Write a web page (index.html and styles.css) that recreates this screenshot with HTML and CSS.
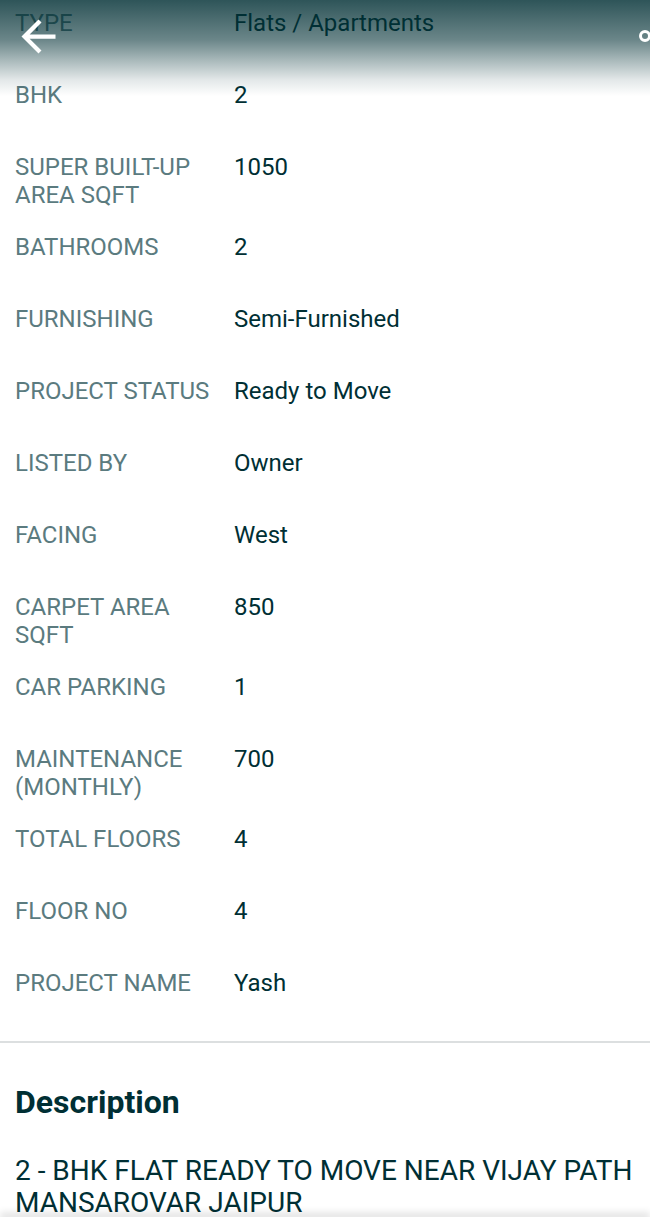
FILE: index.html
```html
<!DOCTYPE html>
<html>
<head>
<meta charset="utf-8">
<link rel="stylesheet" href="styles.css">
</head>
<body>
<div class="topbar">
  <svg class="back" viewBox="0 0 24 24" width="51" height="51"><path fill="#fff" d="M20 11H7.83l5.59-5.59L12 4l-8 8 8 8 1.41-1.41L7.83 13H20v-2z"/></svg>
  <span class="ring"></span>
</div>
<main class="page">
  <section class="details">
    <div class="row"><div class="label">TYPE</div><div class="value">Flats / Apartments</div></div>
    <div class="row"><div class="label">BHK</div><div class="value">2</div></div>
    <div class="row"><div class="label">SUPER BUILT-UP AREA SQFT</div><div class="value">1050</div></div>
    <div class="row"><div class="label">BATHROOMS</div><div class="value">2</div></div>
    <div class="row"><div class="label">FURNISHING</div><div class="value">Semi-Furnished</div></div>
    <div class="row"><div class="label">PROJECT STATUS</div><div class="value">Ready to Move</div></div>
    <div class="row"><div class="label">LISTED BY</div><div class="value">Owner</div></div>
    <div class="row"><div class="label">FACING</div><div class="value">West</div></div>
    <div class="row"><div class="label">CARPET AREA SQFT</div><div class="value">850</div></div>
    <div class="row"><div class="label">CAR PARKING</div><div class="value">1</div></div>
    <div class="row"><div class="label">MAINTENANCE (MONTHLY)</div><div class="value">700</div></div>
    <div class="row"><div class="label">TOTAL FLOORS</div><div class="value">4</div></div>
    <div class="row"><div class="label">FLOOR NO</div><div class="value">4</div></div>
    <div class="row"><div class="label">PROJECT NAME</div><div class="value">Yash</div></div>
  </section>
  <hr class="divider">
  <section class="desc">
    <h2 class="desc-title">Description</h2>
    <p class="desc-text">2 - BHK FLAT READY TO MOVE NEAR VIJAY PATH MANSAROVAR JAIPUR</p>
  </section>
</main>
<div class="bottombar"></div>
</body>
</html>
```
FILE: styles.css
```css
html, body {
  margin: 0;
  padding: 0;
  background: #fff;
  font-family: Roboto, "Noto Sans", sans-serif;
  color: #002f34;
  overflow: hidden;
  height: 1227px;
}
.page {
  padding-top: 9px;
}
.details {
  display: flex;
  flex-direction: column;
  gap: 24px;
  padding: 0 16px 24px 15px;
}
.row {
  display: grid;
  grid-template-columns: 203px 1fr;
  column-gap: 16px;
  min-height: 48px;
  font-size: 24px;
  line-height: 28px;
}
.label {
  color: #5b7b7f;
}
.value {
  color: #002f34;
}
.divider {
  margin: 0;
  border: 0;
  height: 2px;
  background: #dcdfe0;
}
.desc {
  padding: 41px 16px 0 15px;
}
.desc-title {
  margin: 0;
  font-size: 32px;
  line-height: 36px;
  font-weight: 700;
  color: #002f34;
}
.desc-text {
  margin: 35px 0 0 0;
  font-size: 28px;
  line-height: 32px;
  color: #002f34;
}
.topbar {
  position: absolute;
  top: 0;
  left: 0;
  right: 0;
  height: 96px;
  background: linear-gradient(to bottom,
    rgba(0,47,52,0.82) 0px,
    rgba(0,47,52,0.58) 40px,
    rgba(0,47,52,0.34) 60px,
    rgba(0,47,52,0.11) 80px,
    rgba(0,47,52,0) 96px);
  z-index: 5;
}
.back {
  position: absolute;
  left: 13px;
  top: 11px;
}
.ring {
  position: absolute;
  left: 639px;
  top: 30px;
  width: 6px;
  height: 6px;
  border: 3px solid #fff;
  border-radius: 50%;
}
.bottombar {
  position: absolute;
  left: 0;
  right: 0;
  top: 1217px;
  height: 10px;
  background: #fff;
  box-shadow: 0 -5px 7px rgba(0,0,0,0.1);
  z-index: 5;
}
```
